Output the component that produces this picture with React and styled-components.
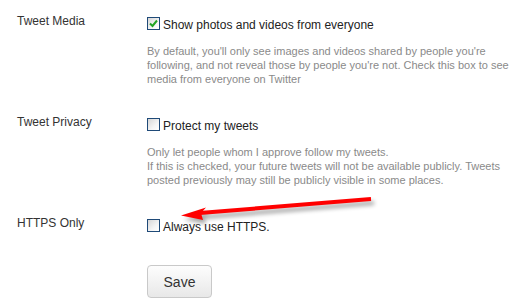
import styled, { createGlobalStyle } from 'styled-components';

const GlobalStyle = createGlobalStyle`
  body {
    margin: 0;
    background: #fff;
    font-family: "Liberation Sans", Arial, sans-serif;
  }
`;

const Page = styled.div`
  position: relative;
  width: 517px;
  height: 302px;
  padding: 13px 0 0 17px;
  box-sizing: border-box;
  overflow: hidden;
`;

const Section = styled.div`
  display: grid;
  grid-template-columns: 130px 1fr;
  margin-bottom: ${p => p.$gap || 28}px;
`;

const Label = styled.div`
  font-size: 12px;
  line-height: 16px;
  color: #333;
`;

const Field = styled.div`
  padding-top: 4px;
`;

const CheckRow = styled.label`
  display: flex;
  align-items: flex-start;
  gap: 3px;
  font-size: 12px;
  line-height: 16px;
  color: #222;
`;

const Box = styled.span`
  width: 13px;
  height: 13px;
  box-sizing: border-box;
  border: 1px solid #1f4a78;
  background: linear-gradient(135deg, #d6d6d6 0%, #f4f4f4 60%, #fff 100%);
  display: flex;
  align-items: center;
  justify-content: center;
  flex-shrink: 0;
`;

const Help = styled.p`
  margin: 11px 0 0;
  font-size: 11px;
  line-height: 14px;
  color: #8a8a8a;
  white-space: nowrap;
`;

const SaveButton = styled.button`
  margin-left: 130px;
  width: 65px;
  height: 33px;
  border: 1px solid #c9c9c9;
  border-radius: 4px;
  background: linear-gradient(#fdfdfd, #e8e8e8);
  font-family: "Liberation Sans", Arial, sans-serif;
  font-size: 14px;
  color: #333;
  padding: 0;
`;

const Overlay = styled.svg`
  position: absolute;
  left: 0;
  top: 0;
  pointer-events: none;
`;

const Checkbox = ({ checked }) => (
  <Box>
    {checked && (
      <svg width="9" height="9" viewBox="0 0 9 9">
        <path d="M1 4.5 L3.5 7 L8 1.5" fill="none" stroke="#22a322" strokeWidth="2" />
      </svg>
    )}
  </Box>
);

const settings = [
  {
    label: 'Tweet Media',
    text: 'Show photos and videos from everyone',
    checked: true,
    help: [
      "By default, you'll only see images and videos shared by people you're",
      "following, and not reveal those by people you're not. Check this box to see",
      'media from everyone on Twitter',
    ],
  },
  {
    label: 'Tweet Privacy',
    text: 'Protect my tweets',
    help: [
      'Only let people whom I approve follow my tweets.',
      'If this is checked, your future tweets will not be available publicly. Tweets',
      'posted previously may still be publicly visible in some places.',
    ],
  },
  {
    label: 'HTTPS Only',
    text: 'Always use HTTPS.',
    gap: 30,
  },
];

const Arrow = () => (
  <Overlay width="517" height="302">
    <defs>
      <filter id="blur" x="-10%" y="-50%" width="120%" height="200%">
        <feGaussianBlur stdDeviation="2" />
      </filter>
    </defs>
    <g transform="translate(3 4)" fill="#000" stroke="#000" opacity="0.35" filter="url(#blur)">
      <line x1="200" y1="213" x2="371" y2="199" strokeWidth="4" />
      <polygon points="181,215.5 206,207.5 201,213 203,220" strokeWidth="0" />
    </g>
    <line x1="200" y1="213" x2="371" y2="199" stroke="#f00" strokeWidth="4" />
    <polygon points="181,215.5 206,207.5 201,213 203,220" fill="#f00" />
  </Overlay>
);

export default function App() {
  return (
    <>
      <GlobalStyle />
      <Page>
        {settings.map(s => (
          <Section key={s.label} $gap={s.gap}>
            <Label>{s.label}</Label>
            <Field>
              <CheckRow>
                <Checkbox checked={s.checked} />
                {s.text}
              </CheckRow>
              {s.help && (
                <Help>
                  {s.help.map((line, i) => (
                    <span key={i}>{line}{i < s.help.length - 1 && <br />}</span>
                  ))}
                </Help>
              )}
            </Field>
          </Section>
        ))}
        <SaveButton>Save</SaveButton>
        <Arrow />
      </Page>
    </>
  );
}
